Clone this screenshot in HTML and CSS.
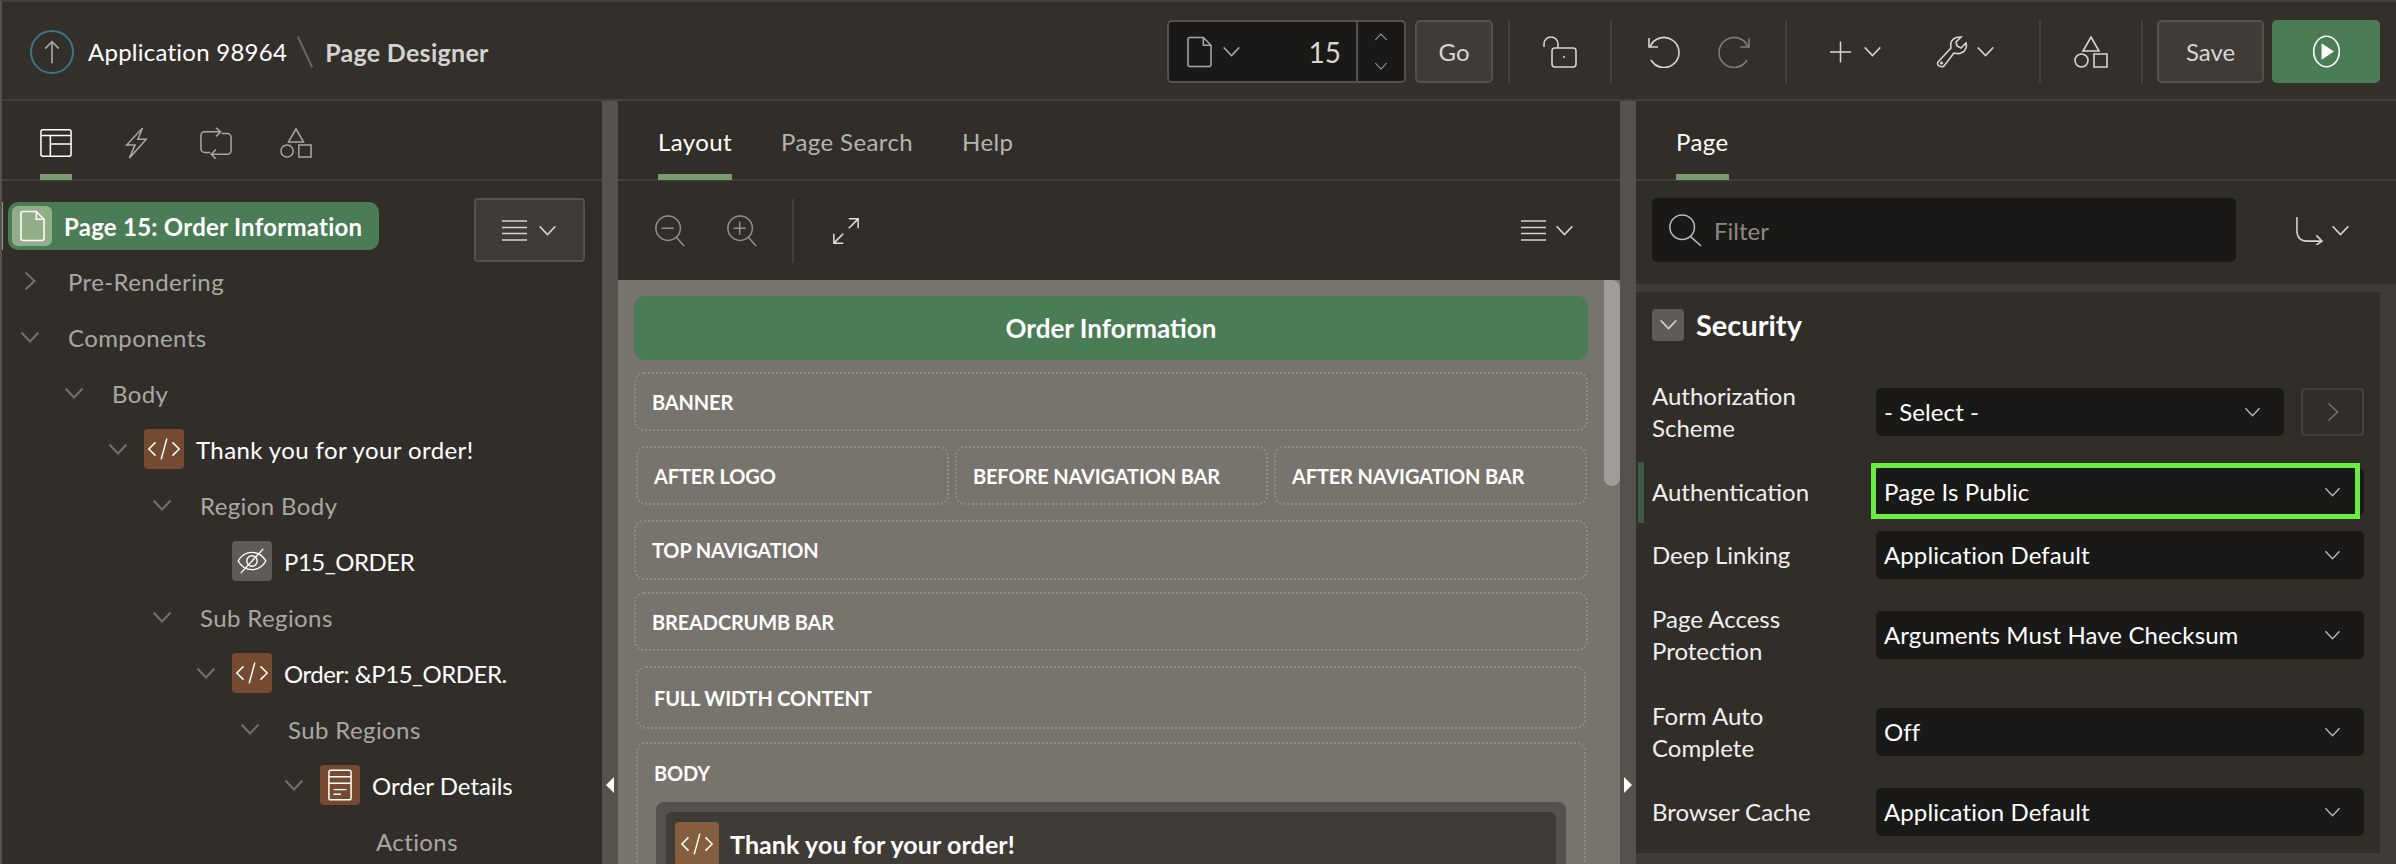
FILE: index.html
```html
<!DOCTYPE html>
<html>
<head>
  <meta charset="utf-8">
  <title>Page Designer</title>
  <link rel="stylesheet" href="styles.css">
</head>
<body>
  <svg class="sprite" xmlns="http://www.w3.org/2000/svg">
    <symbol id="i-chev" viewBox="0 0 20 12"><path d="M1.5 1.5 10 10.5 18.5 1.5"/></symbol>
    <symbol id="i-chev-up" viewBox="0 0 20 12"><path d="M1.5 10.5 10 1.5 18.5 10.5"/></symbol>
    <symbol id="i-chev-r" viewBox="0 0 12 20"><path d="M1.5 1.5 10.5 10 1.5 18.5"/></symbol>
    <symbol id="i-doc" viewBox="0 0 26 32"><path d="M1 3a2 2 0 0 1 2-2h14l8 8v20a2 2 0 0 1-2 2H3a2 2 0 0 1-2-2zM17 1v8h8"/></symbol>
    <symbol id="i-menu" viewBox="0 0 25 21"><path d="M0 1h25M0 7.500h25M0 13.500h25M0 20h25"/></symbol>
    <symbol id="i-shapes" viewBox="0 0 34 32"><path d="M17 1 25 15H9zM20 18h13v13H20z"/><circle cx="7.500" cy="24.500" r="6.500"/></symbol>
    <symbol id="i-layout" viewBox="0 0 34 30"><path d="M3 1h28a2 2 0 0 1 2 2v24a2 2 0 0 1-2 2H3a2 2 0 0 1-2-2V3a2 2 0 0 1 2-2zM1 7h32M11 16h22M11 7v22"/></symbol>
    <symbol id="i-bolt" viewBox="0 0 26 34"><path d="M20 1 3 19h9l-6 14 18-20h-9z"/></symbol>
    <symbol id="i-sync" viewBox="0 0 34 34"><path d="M21 5H5a4 4 0 0 0-4 4v14a4 4 0 0 0 4 4h6M13 29h16a4 4 0 0 0 4-4V11a4 4 0 0 0-4-4h-6M17 1l5 4-5 5M17 24l-5 5 5 5"/></symbol>
    <symbol id="i-lock" viewBox="0 0 34 32"><path d="M1 11V8a7 7 0 0 1 14 0v4"/><rect x="9" y="12" width="24" height="19" rx="3"/><path d="M21 20v2"/></symbol>
    <symbol id="i-undo" viewBox="0 0 34 32"><path d="M3 11A15 15 0 1 1 4 24M2 2v9h9"/></symbol>
    <symbol id="i-redo" viewBox="0 0 34 32"><path d="M31 11A15 15 0 1 0 30 24M32 2v9h-9"/></symbol>
    <symbol id="i-plus" viewBox="0 0 22 24"><path d="M11 1v22M0 12h22"/></symbol>
    <symbol id="i-wrench" viewBox="0 0 34 32"><path d="M2 26 15 12c-1-5 0-8 4-10 2-1 4-1 6-1l-5 5 1 4 4 2 5-5c1 3 0 7-3 9-3 2-6 2-9 1L8 30c-3 2-8-1-6-4z"/><circle cx="5.500" cy="27" r=".8"/></symbol>
    <symbol id="i-goto" viewBox="0 0 30 30"><path d="M2 1v14c0 7 4 11 11 11h15M22 20l6 6-6 4"/></symbol>
    <symbol id="i-search" viewBox="0 0 36 36"><circle cx="15" cy="15" r="13"/><path d="m24 25 11 10"/></symbol>
    <symbol id="i-zoom-out" viewBox="0 0 32 34"><ellipse cx="14" cy="14" rx="13" ry="13"/><path d="M7 14h13M23 24l8 9"/></symbol>
    <symbol id="i-zoom-in" viewBox="0 0 32 34"><ellipse cx="14" cy="14" rx="13" ry="13"/><path d="M7 14h13M13.500 7v14M23 24l8 9"/></symbol>
    <symbol id="i-expand" viewBox="0 0 30 30"><path d="M18 12 28 2M18 2h10v10M12 18 2 28M2 18v10h10"/></symbol>
    <symbol id="i-code" viewBox="0 0 36 24"><path d="M9 5 2 12l7 7M27 5l7 7-7 7M21 1l-6 22"/></symbol>
    <symbol id="i-form" viewBox="0 0 26 34"><rect x="1" y="1" width="24" height="32" rx="2"/><path d="M1 8h24M1 15h24M6 22h14M6 27h8"/></symbol>
    <symbol id="i-eye" viewBox="0 0 36 30"><path d="M2 15c4-7 10-10 16-10s12 3 16 10c-4 7-10 10-16 10S6 22 2 15z"/><circle cx="18" cy="15" r="6"/><path d="M31 1 5 29"/></symbol>
  </svg>

  <div class="app">
    <header class="topbar">
      <div class="crumbs">
        <span class="up-btn"><svg viewBox="0 0 20 28" class="up-arrow"><path d="M10 27V2M2 10l8-8 8 8"/></svg></span>
        <span class="app-name">Application 98964</span>
        <span class="slash"></span>
        <span class="pd-name">Page Designer</span>
      </div>
      <div class="tools">
        <div class="page-picker">
          <svg class="ico doc-ico"><use href="#i-doc"/></svg>
          <svg class="ico chev"><use href="#i-chev"/></svg>
          <span class="page-num">15</span>
          <div class="spin">
            <svg class="ico chev-sm"><use href="#i-chev-up"/></svg>
            <svg class="ico chev-sm"><use href="#i-chev"/></svg>
          </div>
        </div>
        <button class="btn go-btn">Go</button>
        <span class="tool-sep first"></span>
        <span class="tool lock-tool"><svg class="ico ico-l"><use href="#i-lock"/></svg></span>
        <span class="tool-sep"></span>
        <span class="tool undo-tool">
          <svg class="ico ico-l"><use href="#i-undo"/></svg>
          <svg class="ico ico-l dim"><use href="#i-redo"/></svg>
        </span>
        <span class="tool-sep"></span>
        <span class="tool add-tool">
          <svg class="ico plus-ico"><use href="#i-plus"/></svg>
          <svg class="ico chev"><use href="#i-chev"/></svg>
          <svg class="ico ico-l wrench-ico"><use href="#i-wrench"/></svg>
          <svg class="ico chev"><use href="#i-chev"/></svg>
        </span>
        <span class="tool-sep"></span>
        <span class="tool shape-tool"><svg class="ico ico-l"><use href="#i-shapes"/></svg></span>
        <span class="tool-sep"></span>
        <button class="btn save-btn">Save</button>
        <button class="run-btn">
          <svg viewBox="0 0 34 40" class="run-ico"><ellipse cx="17" cy="20" rx="15.500" ry="18.500"/><path d="M11 10 26 20 11 30z"/></svg>
        </button>
      </div>
    </header>

    <main class="panes">
      <section class="pane left-pane">
        <div class="tabs icon-tabs">
          <span class="icon-tab active"><svg class="ico tab-ico"><use href="#i-layout"/></svg></span>
          <span class="icon-tab"><svg class="ico tab-ico"><use href="#i-bolt"/></svg></span>
          <span class="icon-tab"><svg class="ico tab-ico"><use href="#i-sync"/></svg></span>
          <span class="icon-tab"><svg class="ico tab-ico"><use href="#i-shapes"/></svg></span>
        </div>
        <div class="tree">
          <div class="page-node">
            <span class="page-node-ico"><svg class="ico"><use href="#i-doc"/></svg></span>
            <span>Page 15: Order Information</span>
          </div>
          <button class="menu-btn">
            <svg class="ico menu-ico"><use href="#i-menu"/></svg>
            <svg class="ico chev"><use href="#i-chev"/></svg>
          </button>
          <div class="row lv0"><svg class="ico toggle side"><use href="#i-chev-r"/></svg><span class="muted">Pre-Rendering</span></div>
          <div class="row lv0"><svg class="ico toggle"><use href="#i-chev"/></svg><span class="muted">Components</span></div>
          <div class="row lv1"><svg class="ico toggle"><use href="#i-chev"/></svg><span class="muted">Body</span></div>
          <div class="row lv2"><svg class="ico toggle"><use href="#i-chev"/></svg><span class="node-ico brown"><svg class="ico"><use href="#i-code"/></svg></span><span class="node-text">Thank you for your order!</span></div>
          <div class="row lv3"><svg class="ico toggle"><use href="#i-chev"/></svg><span class="muted">Region Body</span></div>
          <div class="row lv4"><span class="toggle"></span><span class="node-ico grey"><svg class="ico"><use href="#i-eye"/></svg></span><span class="caps">P15_ORDER</span></div>
          <div class="row lv3"><svg class="ico toggle"><use href="#i-chev"/></svg><span class="muted">Sub Regions</span></div>
          <div class="row lv4"><svg class="ico toggle"><use href="#i-chev"/></svg><span class="node-ico brown"><svg class="ico"><use href="#i-code"/></svg></span><span class="caps">Order: &amp;P15_ORDER.</span></div>
          <div class="row lv5"><svg class="ico toggle"><use href="#i-chev"/></svg><span class="muted">Sub Regions</span></div>
          <div class="row lv6"><svg class="ico toggle"><use href="#i-chev"/></svg><span class="node-ico brown"><svg class="ico form-ico"><use href="#i-form"/></svg></span><span>Order Details</span></div>
          <div class="row lv7"><span class="toggle"></span><span class="muted">Actions</span></div>
        </div>
      </section>

      <div class="splitter"><span class="arrow-left"></span></div>

      <section class="pane center-pane">
        <div class="tabs text-tabs">
          <span class="text-tab active">Layout</span>
          <span class="text-tab">Page Search</span>
          <span class="text-tab">Help</span>
        </div>
        <div class="layout-bar">
          <svg class="ico zoom-ico"><use href="#i-zoom-out"/></svg>
          <svg class="ico zoom-ico"><use href="#i-zoom-in"/></svg>
          <span class="bar-sep"></span>
          <svg class="ico expand-ico"><use href="#i-expand"/></svg>
          <span class="bar-menu">
            <svg class="ico menu-ico"><use href="#i-menu"/></svg>
            <svg class="ico chev"><use href="#i-chev"/></svg>
          </span>
        </div>
        <div class="canvas">
          <div class="page-title">Order Information</div>
          <div class="slot slot-banner">BANNER</div>
          <div class="slot-row">
            <div class="slot">AFTER LOGO</div>
            <div class="slot">BEFORE NAVIGATION BAR</div>
            <div class="slot">AFTER NAVIGATION BAR</div>
          </div>
          <div class="slot slot-topnav">TOP NAVIGATION</div>
          <div class="slot slot-crumb">BREADCRUMB BAR</div>
          <div class="slot slot-inset slot-full">FULL WIDTH CONTENT</div>
          <div class="slot slot-inset slot-body">
            <div class="body-label">BODY</div>
            <div class="region-outer">
              <div class="region-inner">
                <span class="region-ico"><svg class="ico"><use href="#i-code"/></svg></span>
                <span>Thank you for your order!</span>
              </div>
            </div>
          </div>
          <span class="canvas-thumb"></span>
        </div>
      </section>

      <div class="splitter"><span class="arrow-right"></span></div>

      <section class="pane right-pane">
        <div class="tabs text-tabs">
          <span class="text-tab active">Page</span>
        </div>
        <div class="filter-bar">
          <div class="filter">
            <svg class="ico search-ico"><use href="#i-search"/></svg>
            <span>Filter</span>
          </div>
          <span class="goto">
            <svg class="ico goto-ico"><use href="#i-goto"/></svg>
            <svg class="ico chev"><use href="#i-chev"/></svg>
          </span>
        </div>
        <div class="props">
          <div class="group">
            <div class="group-head">
              <span class="collapse"><svg class="ico chev"><use href="#i-chev"/></svg></span>
              <h2>Security</h2>
            </div>
            <div class="prop tall">
              <label>Authorization Scheme</label>
              <div class="select short"><span>- Select -</span><svg class="ico chev"><use href="#i-chev"/></svg></div>
              <span class="go-link"><svg class="ico"><use href="#i-chev-r"/></svg></span>
            </div>
            <div class="prop current">
              <label>Authentication</label>
              <div class="select focus-wrap"><span>Page Is Public</span><svg class="ico chev"><use href="#i-chev"/></svg><span class="highlight"></span></div>
            </div>
            <div class="prop">
              <label>Deep Linking</label>
              <div class="select"><span>Application Default</span><svg class="ico chev"><use href="#i-chev"/></svg></div>
            </div>
            <div class="prop tall">
              <label>Page Access Protection</label>
              <div class="select"><span>Arguments Must Have Checksum</span><svg class="ico chev"><use href="#i-chev"/></svg></div>
            </div>
            <div class="prop tall">
              <label>Form Auto Complete</label>
              <div class="select"><span>Off</span><svg class="ico chev"><use href="#i-chev"/></svg></div>
            </div>
            <div class="prop">
              <label>Browser Cache</label>
              <div class="select"><span>Application Default</span><svg class="ico chev"><use href="#i-chev"/></svg></div>
            </div>
          </div>
        </div>
      </section>
    </main>
  </div>
</body>
</html>
```

FILE: styles.css
```css
* {
  box-sizing: border-box;
}

html, body {
  margin: 0;
  height: 100%;
  overflow: hidden;
}

body {
  background-color: #312e2a;
  color: #fff;
  font-family: Lato, "Open Sans", sans-serif;
  font-size: 24px;
}

.sprite {
  display: none;
}

.ico {
  display: block;
  fill: none;
  stroke: currentColor;
  stroke-width: 1.6;
  overflow: visible;
}

.app {
  height: 864px;
  display: flex;
  flex-direction: column;
  border-top: 2px solid #45423e;
  border-left: 2px solid #55514c;
}

/* header */
.topbar {
  height: 99px;
  flex: none;
  display: flex;
  justify-content: space-between;
  background-color: #33302c;
  border-bottom: 2px solid #43403c;
  padding-top: 18px;
}

.crumbs {
  display: flex;
  align-items: center;
  height: 63px;
  padding-left: 28px;
}

.app-name {
  letter-spacing: .25px;
}

.up-btn {
  width: 44px;
  height: 44px;
  border: 2px solid #3f7587;
  border-radius: 50%;
  display: flex;
  align-items: center;
  justify-content: center;
  margin-right: 14px;
}

.up-arrow {
  width: 18px;
  height: 24px;
  fill: none;
  stroke: #a5a3a0;
  stroke-width: 2;
}

.slash {
  width: 2px;
  height: 34px;
  background-color: #6c6965;
  transform: rotate(-25deg);
  margin: 0 19px 0 17px;
}

.pd-name {
  font-weight: 700;
  font-size: 25px;
  letter-spacing: .3px;
  color: #d4d3d1;
}

.tools {
  display: flex;
  height: 63px;
  padding-right: 16px;
  color: #d6d5d3;
}

.chev {
  width: 19px;
  height: 11px;
  flex: none;
}

.page-picker {
  width: 239px;
  display: flex;
  align-items: center;
  background-color: #191917;
  border: 2px solid #55514c;
  border-radius: 5px;
  padding-left: 18px;
}

.doc-ico {
  width: 25px;
  height: 32px;
  color: #a9a7a4;
}

.page-picker .chev {
  margin-left: 10px;
  color: #a9a7a4;
}

.page-num {
  flex: 1;
  text-align: right;
  padding-right: 15px;
  font-size: 28px;
}

.spin {
  width: 48px;
  height: 100%;
  border-left: 2px solid #55514c;
  display: flex;
  flex-direction: column;
  align-items: center;
  justify-content: center;
  gap: 21px;
  color: #a9a7a4;
}

.chev-sm {
  width: 14px;
  height: 8px;
}

.btn {
  font: inherit;
  color: #d6d5d3;
  background-color: #3f3c38;
  border: 2px solid #55514c;
  border-radius: 5px;
}

.go-btn {
  width: 78px;
  margin-left: 9px;
}

.save-btn {
  width: 107px;
  margin-left: 14px;
}

.run-btn {
  width: 108px;
  margin-left: 8px;
  background-color: #4a7c56;
  border: 0;
  border-radius: 5px;
  display: flex;
  align-items: center;
  justify-content: center;
}

.run-ico {
  width: 33px;
  height: 33px;
  stroke: #fff;
  stroke-width: 2;
  fill: none;
}

.run-ico path {
  fill: #fff;
  stroke: none;
}

.tool-sep {
  width: 2px;
  background-color: #45423e;
}

.tool-sep.first {
  margin-left: 15px;
}

.tool {
  display: flex;
  align-items: center;
}

.ico-l {
  width: 34px;
  height: 32px;
}

.dim {
  color: #7e7c78;
}

.lock-tool {
  width: 100px;
  justify-content: center;
}

.undo-tool {
  width: 173px;
  justify-content: center;
  gap: 36px;
}

.add-tool {
  width: 252px;
  padding-left: 43px;
}

.plus-ico {
  width: 21px;
  height: 24px;
}

.add-tool .chev {
  margin-left: 12px;
}

.wrench-ico {
  margin-left: 54px;
}

.add-tool .wrench-ico + .chev {
  margin-left: 6px;
}

.shape-tool {
  width: 100px;
  justify-content: center;
}

/* panes */
.panes {
  flex: 1;
  display: flex;
  min-height: 0;
}

.pane {
  position: relative;
  overflow: hidden;
  display: flex;
  flex-direction: column;
}

.left-pane {
  width: 600px;
}

.center-pane {
  width: 1002px;
}

.right-pane {
  flex: 1;
}

.splitter {
  width: 16px;
  flex: none;
  background-color: #55514c;
  position: relative;
}

.arrow-left, .arrow-right {
  position: absolute;
  top: 676px;
  left: 4px;
  border-top: 8px solid transparent;
  border-bottom: 8px solid transparent;
}

.arrow-left {
  border-right: 8px solid #fff;
}

.arrow-right {
  border-left: 8px solid #fff;
}

.tabs {
  height: 80px;
  flex: none;
  display: flex;
  border-bottom: 2px solid #43403c;
}

.icon-tabs {
  padding-left: 38px;
  gap: 48px;
}

.icon-tab {
  width: 32px;
  display: flex;
  justify-content: center;
  padding-top: 26px;
  color: #a9a7a4;
}

.icon-tab.active {
  color: #fff;
  border-bottom: 6px solid #7a9a6f;
  height: 79px;
}

.tab-ico {
  width: 32px;
  height: 32px;
}

.text-tabs {
  padding-left: 40px;
  gap: 49px;
}

.text-tab {
  height: 79px;
  padding-top: 26px;
  letter-spacing: .4px;
  color: #b5b3b0;
}

.text-tab.active {
  color: #fff;
  border-bottom: 6px solid #7a9a6f;
}

/* tree */
.tree {
  position: relative;
  flex: 1;
  padding-top: 21px;
}

.page-node {
  width: 371px;
  height: 48px;
  margin-left: 6px;
  margin-bottom: 3px;
  display: flex;
  align-items: center;
  gap: 12px;
  padding-left: 4px;
  background-color: #4a7c56;
  border-radius: 10px;
  font-weight: 700;
  letter-spacing: .25px;
  position: relative;
}

.page-node::before {
  content: "";
  position: absolute;
  left: -8px;
  top: 0;
  bottom: 0;
  width: 3px;
  background-color: #7fa37a;
}

.page-node-ico {
  width: 40px;
  height: 40px;
  background-color: #92ae88;
  border-radius: 6px;
  display: flex;
  align-items: center;
  justify-content: center;
}

.page-node-ico .ico {
  width: 25px;
  height: 32px;
}

.menu-btn {
  position: absolute;
  top: 17px;
  right: 17px;
  width: 111px;
  height: 64px;
  background-color: #3f3c38;
  border: 2px solid #55514c;
  border-radius: 4px;
  color: #d6d5d3;
  display: flex;
  align-items: center;
  justify-content: center;
  gap: 11px;
}

.menu-ico {
  width: 25px;
  height: 21px;
}

.row {
  height: 56px;
  display: flex;
  align-items: center;
}

.lv0 { padding-left: 18px; }
.lv1 { padding-left: 62px; }
.lv2 { padding-left: 106px; }
.lv3 { padding-left: 150px; }
.lv4 { padding-left: 194px; }
.lv5 { padding-left: 238px; }
.lv6 { padding-left: 282px; }
.lv7 { padding-left: 326px; }

.toggle {
  width: 20px;
  height: 12px;
  flex: none;
  margin-right: 28px;
  color: #71706b;
  stroke-width: 2;
}

.toggle.side {
  height: 20px;
  width: 12px;
  margin-left: 4px;
  margin-right: 32px;
}

.muted {
  color: #a9a7a4;
  letter-spacing: .4px;
}

.node-text {
  letter-spacing: .4px;
}

.caps {
  letter-spacing: -.5px;
}

.node-ico {
  width: 40px;
  height: 40px;
  flex: none;
  margin-left: -12px;
  margin-right: 12px;
  border-radius: 4px;
  display: flex;
  align-items: center;
  justify-content: center;
  color: #fff;
}

.node-ico .ico {
  width: 34px;
  height: 26px;
}

.node-ico .form-ico {
  width: 24px;
  height: 32px;
}

.brown {
  background-color: #754a30;
}

.grey {
  background-color: #5f5c58;
}

/* layout canvas */
.layout-bar {
  height: 99px;
  flex: none;
  display: flex;
  align-items: center;
  padding-left: 36px;
  padding-right: 46px;
  color: #93918d;
}

.zoom-ico {
  width: 32px;
  height: 32px;
  margin-right: 40px;
}

.zoom-ico + .zoom-ico {
  margin-right: 34px;
}

.bar-sep {
  width: 2px;
  height: 64px;
  background-color: #45423e;
}

.expand-ico {
  width: 28px;
  height: 28px;
  margin-left: 38px;
  color: #e0dfdd;
}

.bar-menu {
  margin-left: auto;
  display: flex;
  align-items: center;
  gap: 9px;
  color: #d6d5d3;
}

.canvas {
  flex: 1;
  position: relative;
  background-color: #77736d;
  padding: 16px 32px 0 16px;
  overflow: hidden;
}

.canvas-thumb {
  position: absolute;
  top: 0;
  right: 0;
  width: 16px;
  height: 206px;
  background-color: #a09d99;
  border-radius: 0 8px 8px 8px;
}

.page-title {
  height: 64px;
  background-color: #4a7c56;
  border-radius: 10px;
  display: flex;
  align-items: center;
  justify-content: center;
  font-size: 26px;
  font-weight: 700;
}

.slot {
  border: 2px dotted #918d87;
  border-radius: 10px;
  font-size: 20px;
  font-weight: 700;
  letter-spacing: -.15px;
  padding-left: 16px;
  display: flex;
  align-items: center;
  height: 59px;
}

.slot-banner {
  margin-top: 12px;
}

.slot-row {
  display: flex;
  gap: 6px;
  margin: 15px 1px 0 2px;
}

.slot-row .slot {
  flex: 1;
}

.slot-topnav {
  margin-top: 15px;
  height: 60px;
}

.slot-crumb {
  margin-top: 12px;
}

.slot-inset {
  margin-left: 2px;
  margin-right: 2px;
}

.slot-full {
  margin-top: 15px;
  height: 63px;
}

.slot-body {
  margin-top: 13px;
  height: 200px;
  display: block;
  padding: 0 18px 0 0;
}

.body-label {
  height: 58px;
  line-height: 58px;
  padding-left: 16px;
}

.region-outer {
  margin-left: 18px;
  background-color: #55514c;
  border-radius: 8px 8px 0 0;
  padding: 10px 10px 0;
  height: 100px;
}

.region-inner {
  height: 90px;
  background-color: #3f3c37;
  border-radius: 6px 6px 0 0;
  padding: 10px 0 0 9px;
  display: flex;
  align-items: flex-start;
  gap: 11px;
  font-size: 25px;
  letter-spacing: .1px;
}

.region-ico {
  width: 44px;
  height: 44px;
  background-color: #855d3f;
  border-radius: 4px;
  display: flex;
  align-items: center;
  justify-content: center;
}

.region-ico .ico {
  width: 34px;
  height: 26px;
}

.region-inner > span:last-child {
  line-height: 44px;
}

/* property editor */
.filter-bar {
  height: 103px;
  flex: none;
  display: flex;
  align-items: center;
  padding: 0 46px 5px 16px;
  color: #d6d5d3;
}

.filter {
  width: 584px;
  height: 64px;
  background-color: #191917;
  border-radius: 5px;
  display: flex;
  align-items: center;
  gap: 12px;
  padding-left: 16px;
  color: #8b8985;
}

.search-ico {
  width: 34px;
  height: 34px;
  color: #bdbbb8;
}

.goto {
  margin-left: auto;
  display: flex;
  align-items: center;
  gap: 7px;
}

.goto-ico {
  width: 29px;
  height: 29px;
}

.props {
  flex: 1;
  background-color: #3f3c38;
  padding: 8px 16px 0 0;
}

.group {
  background-color: #312e2a;
  height: 561px;
  padding-left: 16px;
}

.group-head {
  height: 71px;
  display: flex;
  align-items: center;
  gap: 12px;
  padding-bottom: 6px;
}

.group-head h2 {
  margin: 0;
  font-size: 29px;
  font-weight: 700;
}

.collapse {
  width: 32px;
  height: 32px;
  background-color: #5f5c58;
  border-radius: 4px;
  display: flex;
  align-items: center;
  justify-content: center;
  color: #d6d5d3;
}

.prop {
  height: 63px;
  display: flex;
  align-items: center;
  position: relative;
  padding-right: 16px;
}

.prop.tall {
  height: 97px;
}

.prop.current::before {
  content: "";
  position: absolute;
  left: -14px;
  top: 2px;
  bottom: 0;
  width: 6px;
  background-color: #3b5a44;
}

.prop label {
  width: 224px;
  flex: none;
  padding-right: 40px;
  line-height: 32px;
  color: #f0efee;
}

.select {
  flex: 1;
  height: 48px;
  background-color: #191917;
  border-radius: 5px;
  display: flex;
  align-items: center;
  justify-content: space-between;
  padding: 0 23px 0 8px;
  letter-spacing: .1px;
  position: relative;
}

.select .ico {
  width: 17px;
  height: 10px;
  color: #bdbbb8;
}

.select.short {
  flex: none;
  width: 408px;
}

.go-link {
  width: 63px;
  height: 48px;
  margin-left: 17px;
  border: 2px solid #45423e;
  border-radius: 4px;
  display: flex;
  align-items: center;
  justify-content: center;
  color: #71706b;
}

.go-link .ico {
  width: 12px;
  height: 20px;
}

.highlight {
  position: absolute;
  top: -5px;
  left: -5px;
  right: 4px;
  bottom: -3px;
  border: 5px solid #6bec42;
}
```
